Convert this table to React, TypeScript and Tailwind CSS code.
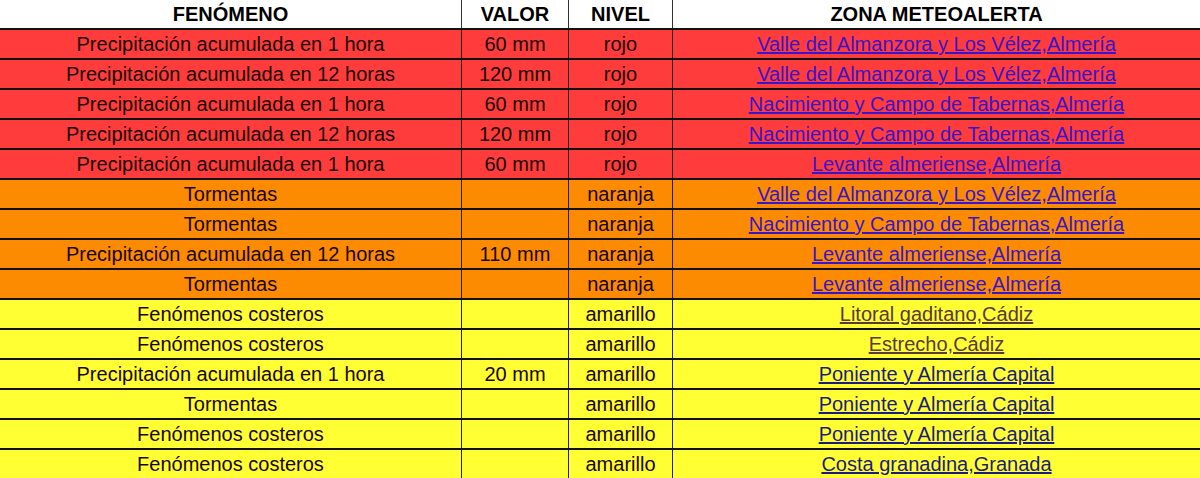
import React from "react";

type Row = { f: string; v: string; n: string; z: string; c: "r" | "o" | "y"; visited?: boolean };

const rows: Row[] = [
  { f: "Precipitación acumulada en 1 hora", v: "60 mm", n: "rojo", z: "Valle del Almanzora y Los Vélez,Almería", c: "r" },
  { f: "Precipitación acumulada en 12 horas", v: "120 mm", n: "rojo", z: "Valle del Almanzora y Los Vélez,Almería", c: "r" },
  { f: "Precipitación acumulada en 1 hora", v: "60 mm", n: "rojo", z: "Nacimiento y Campo de Tabernas,Almería", c: "r" },
  { f: "Precipitación acumulada en 12 horas", v: "120 mm", n: "rojo", z: "Nacimiento y Campo de Tabernas,Almería", c: "r" },
  { f: "Precipitación acumulada en 1 hora", v: "60 mm", n: "rojo", z: "Levante almeriense,Almería", c: "r" },
  { f: "Tormentas", v: "", n: "naranja", z: "Valle del Almanzora y Los Vélez,Almería", c: "o" },
  { f: "Tormentas", v: "", n: "naranja", z: "Nacimiento y Campo de Tabernas,Almería", c: "o" },
  { f: "Precipitación acumulada en 12 horas", v: "110 mm", n: "naranja", z: "Levante almeriense,Almería", c: "o" },
  { f: "Tormentas", v: "", n: "naranja", z: "Levante almeriense,Almería", c: "o" },
  { f: "Fenómenos costeros", v: "", n: "amarillo", z: "Litoral gaditano,Cádiz", c: "y", visited: true },
  { f: "Fenómenos costeros", v: "", n: "amarillo", z: "Estrecho,Cádiz", c: "y", visited: true },
  { f: "Precipitación acumulada en 1 hora", v: "20 mm", n: "amarillo", z: "Poniente y Almería Capital", c: "y" },
  { f: "Tormentas", v: "", n: "amarillo", z: "Poniente y Almería Capital", c: "y" },
  { f: "Fenómenos costeros", v: "", n: "amarillo", z: "Poniente y Almería Capital", c: "y" },
  { f: "Fenómenos costeros", v: "", n: "amarillo", z: "Costa granadina,Granada", c: "y" },
];

const bg = { r: "bg-[#ff3c3c]", o: "bg-[#fd8b02]", y: "bg-[#ffff33]" };

export default function App() {
  return (
    <div className="w-[1200px] h-[478px] overflow-hidden bg-white text-black text-[20px] leading-none" style={{ fontFamily: '"Liberation Sans", Arial, sans-serif' }}>
      <div className="flex h-[30px] border-b-2 border-[#111] font-bold bg-white">
        <div className="w-[461px] flex items-center justify-center">FENÓMENO</div>
        <div className="w-[107px] border-l border-[#333] flex items-center justify-center">VALOR</div>
        <div className="w-[104px] border-l border-[#333] flex items-center justify-center">NIVEL</div>
        <div className="flex-1 border-l border-[#333] flex items-center justify-center">ZONA METEOALERTA</div>
      </div>
      {rows.map((r, i) => (
        <div key={i} className={`flex h-[30px] border-b-2 border-[#111] ${bg[r.c]}`}>
          <div className="w-[461px] flex items-center justify-center text-[#1a0505]">{r.f}</div>
          <div className="w-[107px] border-l border-[#222] flex items-center justify-center text-[#1a0505]">{r.v}</div>
          <div className="w-[104px] border-l border-[#222] flex items-center justify-center text-[#1a0505]">{r.n}</div>
          <div className="flex-1 border-l border-[#222] flex items-center justify-center">
            <a href="#" className={`underline ${r.visited ? "text-[#5a3a3a]" : r.c === "y" ? "text-[#1c1c80]" : "text-[#3a16c8]"}`}>{r.z}</a>
          </div>
        </div>
      ))}
    </div>
  );
}
